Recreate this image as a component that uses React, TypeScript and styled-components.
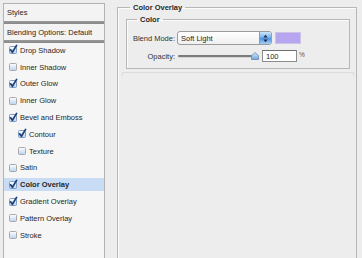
import styled, {createGlobalStyle} from "styled-components";

const GlobalStyle = createGlobalStyle`
  html, body {
    margin: 0;
    padding: 0;
    background: #ededed;
    overflow: hidden;
  }
  body {
    font-family: "Liberation Sans", Arial, sans-serif;
    font-size: 7.5px;
    color: #262626;
  }
`

const Page = styled.div`
  display: flex;
  gap: 12px;
  padding: 3px 0 0 3px;
  height: 258px;
  box-sizing: border-box;
  overflow: hidden;
`

// left column: list of layer styles
const StylesPanel = styled.div`
  width: 102px;
  height: 280px;
  flex: none;
  box-sizing: border-box;
  border: 1px solid #b3b3b3;
  background: #f6f6f6;
  display: flex;
  flex-direction: column;
`

const HeaderRow = styled.div<{ $h: number }>`
  height: ${p => p.$h}px;
  display: flex;
  align-items: center;
  padding-left: 3px;
  background: #f3f3f3;
`

const Bar = styled.div`
  height: 3px;
  background: linear-gradient(#9a9a9a, #878787);
`

const List = styled.div`
  margin-top: -1px;
  display: flex;
  flex-direction: column;
`

const Row = styled.div<{ $indent?: boolean; $selected?: boolean }>`
  height: 16.8px;
  display: flex;
  align-items: center;
  gap: 3px;
  padding-left: ${p => (p.$indent ? 14 : 5)}px;
  font-weight: ${p => (p.$selected ? "bold" : "normal")};
  background: ${p =>
    p.$selected
      ? "linear-gradient(transparent 1.6px, #c8dcf5 1.6px, #c8dcf5 15.4px, transparent 15.4px)"
      : "transparent"};
`

const Check = ({on}: { on: boolean }) => (
    <svg width="8" height="8" viewBox="0 0 8 8" style={{overflow: "visible", flex: "none"}}>
        <defs>
            <linearGradient id="cb" x1="0" y1="0" x2="0" y2="1">
                <stop offset="0" stopColor="#ffffff"/>
                <stop offset="1" stopColor={on ? "#b9d3f0" : "#e9e9e9"}/>
            </linearGradient>
        </defs>
        <rect x="0.5" y="0.5" width="7" height="7" rx="1" fill="url(#cb)" stroke={on ? "#7f9cc2" : "#a9a9a9"}/>
        {on && <path d="M1.6 3.8 L3.4 6.3 L7.6 -0.6" fill="none" stroke="#1d3f78" strokeWidth="1.7" strokeLinecap="round" strokeLinejoin="round"/>}
    </svg>
)

const items: { label: string; on: boolean; indent?: boolean; selected?: boolean }[] = [
    {label: "Drop Shadow", on: true},
    {label: "Inner Shadow", on: false},
    {label: "Outer Glow", on: true},
    {label: "Inner Glow", on: false},
    {label: "Bevel and Emboss", on: true},
    {label: "Contour", on: true, indent: true},
    {label: "Texture", on: false, indent: true},
    {label: "Satin", on: false},
    {label: "Color Overlay", on: true, selected: true},
    {label: "Gradient Overlay", on: true},
    {label: "Pattern Overlay", on: false},
    {label: "Stroke", on: false},
]

// right column: group boxes
const Group = styled.fieldset<{ $w: number }>`
  margin: 0;
  width: ${p => p.$w}px;
  box-sizing: border-box;
  border: 1px solid #b7b7b7;
  box-shadow: inset 1px 1px 0 #fbfbfb;
  min-inline-size: 0;
`

const OuterGroup = styled(Group)`
  height: 290px;
  flex: none;
  padding: 3px 6px 0 8px;
`

const InnerGroup = styled(Group)`
  padding: 7px 0 6px 0;
  display: flex;
  flex-direction: column;
  gap: 5px;
`

const Legend = styled.legend<{ $ml: number }>`
  font-weight: bold;
  line-height: 9px;
  padding: 0 3px;
  margin-left: ${p => p.$ml}px;
`

const Divider = styled.div`
  margin: 3px 0 0 -4px;
  width: 230px;
  height: 3px;
  border: 1px solid #dcdcdc;
  border-bottom: none;
`

const FieldRow = styled.div<{ $h: number }>`
  height: ${p => p.$h}px;
  display: flex;
  align-items: center;
`

const Label = styled.div`
  width: 48px;
  text-align: right;
  padding-right: 1px;
  flex: none;
  color: #333;
`

const Select = styled.div`
  margin-left: 1px;
  width: 95px;
  height: 14px;
  box-sizing: border-box;
  border: 1px solid #9c9c9c;
  border-radius: 3px;
  background: linear-gradient(#ffffff, #efefef);
  display: flex;
  align-items: center;
  justify-content: space-between;
  padding-left: 3px;
  overflow: hidden;
`

const Stepper = styled.div`
  width: 11px;
  height: 100%;
  background: linear-gradient(#cfe6fb, #6faaea 50%, #4b8ddc 51%, #a5d0f7);
  border-left: 1px solid #7f9fc4;
  display: flex;
  align-items: center;
  justify-content: center;
`

const Swatch = styled.div`
  margin-left: 3px;
  width: 26px;
  height: 12px;
  background: #b7a5ef;
  border: 1px solid #cbc4e6;
  box-sizing: border-box;
`

const Slider = styled.div`
  margin-left: 2px;
  width: 81px;
  height: 10px;
  display: flex;
  align-items: center;
  justify-content: flex-end;
  position: relative;
`

const Track = styled.div`
  position: absolute;
  left: 0;
  right: 2px;
  top: 4px;
  height: 2px;
  border-radius: 1px;
  background: #7b7b7b;
  box-shadow: 0 1px 0 #d6d6d6;
`

const NumberBox = styled.div`
  margin-left: 3px;
  width: 35px;
  height: 12px;
  box-sizing: border-box;
  border: 1px solid #8d8d8d;
  border-top-color: #6f6f6f;
  background: #fff;
  padding-left: 3px;
  display: flex;
  align-items: center;
`

const Unit = styled.span`
  margin-left: 2px;
  color: #555;
  font-size: 6.5px;
  align-self: flex-start;
  margin-top: 1px;
`

export default function App() {
    return (
        <>
            <GlobalStyle/>
            <Page>
                <StylesPanel>
                    <HeaderRow $h={17}>Styles</HeaderRow>
                    <Bar/>
                    <HeaderRow $h={16}>Blending Options: Default</HeaderRow>
                    <Bar/>
                    <List>
                        {items.map(it => (
                            <Row key={it.label} $indent={it.indent} $selected={it.selected}>
                                <Check on={it.on}/>
                                <span>{it.label}</span>
                            </Row>
                        ))}
                    </List>
                </StylesPanel>

                <OuterGroup $w={240}>
                    <Legend $ml={4}>Color Overlay</Legend>
                    <InnerGroup $w={224}>
                        <Legend $ml={10}>Color</Legend>
                        <FieldRow $h={14}>
                            <Label>Blend Mode:</Label>
                            <Select>
                                <span>Soft Light</span>
                                <Stepper>
                                    <svg width="5" height="9" viewBox="0 0 5 9">
                                        <path d="M2.5 0.8 L4.6 3.6 L0.4 3.6 Z M2.5 8.2 L4.6 5.4 L0.4 5.4 Z" fill="#1d2b3d"/>
                                    </svg>
                                </Stepper>
                            </Select>
                            <Swatch/>
                        </FieldRow>
                        <FieldRow $h={12}>
                            <Label>Opacity:</Label>
                            <Slider>
                                <Track/>
                                <svg width="8" height="8" viewBox="0 0 8 8" style={{position: "relative"}}>
                                    <defs>
                                        <linearGradient id="th" x1="0" y1="0" x2="0" y2="1">
                                            <stop offset="0" stopColor="#d9ebfb"/>
                                            <stop offset="1" stopColor="#6fa5df"/>
                                        </linearGradient>
                                    </defs>
                                    <path d="M4 0.5 L7.5 3.6 L7.5 7.5 L0.5 7.5 L0.5 3.6 Z" fill="url(#th)" stroke="#6d87a8" strokeWidth="0.8"/>
                                </svg>
                            </Slider>
                            <NumberBox>100</NumberBox>
                            <Unit>%</Unit>
                        </FieldRow>
                    </InnerGroup>
                    <Divider/>
                </OuterGroup>
            </Page>
        </>
    )
}
